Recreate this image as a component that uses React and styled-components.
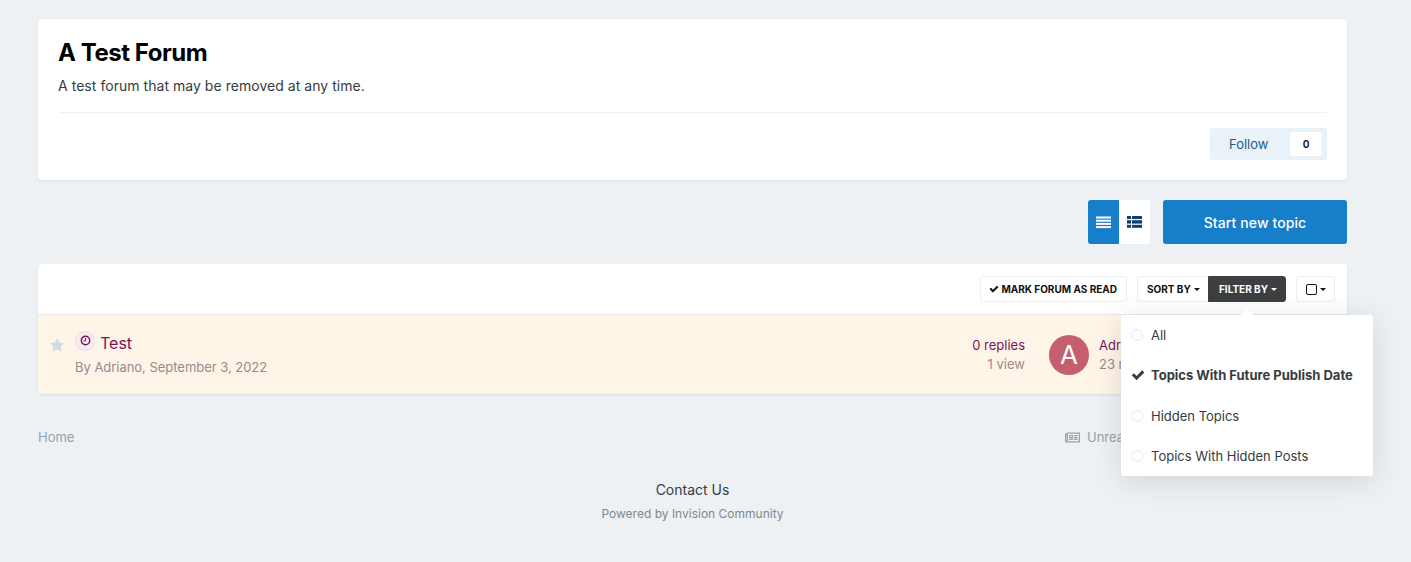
import styled, { createGlobalStyle } from "styled-components";
import { FaRegNewspaper, FaStar } from "react-icons/fa";

const Global = createGlobalStyle`
  html, body {
    margin: 0;
    padding: 0;
    background: #edf1f4;
    font-family: Inter, "Liberation Sans", sans-serif;
    color: #353c41;
  }
`;

const Page = styled.div`
  width: 1309px;
  margin-left: 38px;
  padding-top: 19px;
  height: 543px;
`;

const Card = styled.div`
  background: #fff;
  border-radius: 4px;
  box-shadow: 0 1px 3px rgba(0, 0, 0, 0.07);
`;

const Header = styled(Card)`
  height: 161px;
  box-sizing: border-box;
  padding: 19px 20px 20px 20px;
`;

const Title = styled.h1`
  margin: 0;
  font-size: 24px;
  line-height: 29px;
  font-weight: 700;
  letter-spacing: -0.45px;
  color: #000;
`;

const Desc = styled.p`
  margin: 9px 0 0;
  font-size: 14px;
  line-height: 20px;
  letter-spacing: 0.04px;
`;

const Rule = styled.div`
  margin: 16px 0 0 1px;
  height: 1px;
  background: #eef0f2;
`;

const FollowRow = styled.div`
  display: flex;
  justify-content: flex-end;
  margin-top: 15px;
`;

const Follow = styled.div`
  width: 117px;
  height: 32px;
  box-sizing: border-box;
  display: flex;
  align-items: center;
  justify-content: space-between;
  padding: 0 5px 0 19px;
  background: #e9f2f9;
  border-radius: 3px;
  font-size: 13px;
  color: #1c5a8c;
`;

const Count = styled.span`
  width: 32px;
  height: 24px;
  display: flex;
  align-items: center;
  justify-content: center;
  background: #fff;
  border-radius: 3px;
  font-size: 10px;
  font-weight: 700;
  color: #222;
`;

const Actions = styled.div`
  display: flex;
  justify-content: flex-end;
  margin-top: 20px;
  height: 44px;
`;

const ViewSwitch = styled.div`
  display: flex;
  width: 62px;
  border-radius: 3px;
  overflow: hidden;
  margin-right: 13px;
`;

const ViewBtn = styled.span`
  flex: 1;
  display: flex;
  align-items: center;
  justify-content: center;
  background: ${(p) => (p.$active ? "#177ec9" : "#fff")};
  color: ${(p) => (p.$active ? "#fff" : "#0f3f6e")};
`;

const Primary = styled.span`
  width: 184px;
  display: flex;
  align-items: center;
  justify-content: center;
  background: #177ec9;
  color: #fff;
  border-radius: 3px;
  font-size: 14px;
  font-weight: 500;
  letter-spacing: 0.1px;
`;

const Table = styled(Card)`
  margin-top: 20px;
`;

const Toolbar = styled.div`
  height: 51px;
  box-sizing: border-box;
  display: flex;
  align-items: flex-start;
  justify-content: flex-end;
  padding: 12px 12px 0 0;
  border-bottom: 1px solid #e6e8ea;
`;

const ToolBtn = styled.span`
  height: 26px;
  box-sizing: border-box;
  display: flex;
  align-items: center;
  gap: 2px;
  padding: 0 9px;
  font-size: 10px;
  font-weight: 700;
  white-space: nowrap;
  background: #fff;
  color: #111;
  border: 1px solid #eceef0;
  border-radius: 3px;
`;

const MarkBtn = styled(ToolBtn)`
  padding-left: 8px;
`;

const Group = styled.div`
  display: flex;
  margin-left: 10px;
  position: relative;
`;

const SortBtn = styled(ToolBtn)`
  width: 71px;
  border-right: 0;
  border-radius: 3px 0 0 3px;
`;

const FilterBtn = styled(ToolBtn)`
  width: 78px;
  padding-left: 10px;
  background: #3d3f43;
  border-color: #3d3f43;
  color: #fff;
  border-radius: 0 3px 3px 0;
`;

const CheckBtn = styled(ToolBtn)`
  width: 39px;
  margin-left: 10px;
  justify-content: center;
  gap: 2px;
  padding: 0;
`;

const Square = styled.span`
  width: 9px;
  height: 9px;
  border: 1px solid #111;
  border-radius: 2px;
`;

const Caret = styled.span`
  width: 0;
  height: 0;
  margin-left: 1px;
  border-left: 3.5px solid transparent;
  border-right: 3.5px solid transparent;
  border-top: 3.5px solid currentColor;
`;

const Menu = styled.div`
  position: absolute;
  top: 39px;
  left: -16px;
  width: 252px;
  height: 161px;
  background: #fff;
  border-radius: 3px;
  box-shadow: 0 5px 30px rgba(0, 0, 0, 0.12);
  z-index: 5;
  display: flex;
  flex-direction: column;
  &::before {
    content: "";
    position: absolute;
    top: -6px;
    left: 119px;
    border-left: 7px solid transparent;
    border-right: 7px solid transparent;
    border-bottom: 6px solid #fff;
  }
`;

const MenuItem = styled.div`
  flex: 1;
  display: flex;
  align-items: center;
  gap: ${(p) => (p.$on ? 6 : 8)}px;
  padding-left: 10px;
  font-size: 13px;
  font-weight: ${(p) => (p.$on ? 700 : 400)};
  color: #353c41;
`;

const Radio = styled.span`
  width: 12px;
  height: 12px;
  box-sizing: border-box;
  border: 1px solid #e5e7ea;
  border-radius: 50%;
`;

const Row = styled.div`
  height: 79px;
  display: flex;
  align-items: center;
  background: #fff4e8;
  border-radius: 0 0 4px 4px;
`;

const StarCell = styled.span`
  width: 37px;
  padding-left: 12px;
  box-sizing: border-box;
  align-self: flex-start;
  margin-top: 23px;
  color: #d3dde0;
  font-size: 14px;
  display: flex;
`;

const TopicCell = styled.div`
  flex: 1;
  padding-bottom: 2px;
`;

const TopicTitle = styled.div`
  display: flex;
  align-items: center;
  gap: 5px;
  font-size: 16px;
  line-height: 22px;
  color: #7a1458;
`;

const ClockBadge = styled.span`
  width: 20px;
  height: 20px;
  margin-top: -4px;
  display: flex;
  justify-content: center;
  padding-top: 3px;
  border-radius: 50%;
  background: #f5ebf0;
  border: 1px solid #e8dbe3;
  box-sizing: border-box;
  color: #7a1458;
`;

const Meta = styled.div`
  margin-top: 4px;
  font-size: 13px;
  line-height: 18px;
  letter-spacing: -0.03px;
  color: #9a8a8a;
`;

const Stats = styled.div`
  width: 80px;
  text-align: right;
  font-size: 13px;
  line-height: 19px;
  color: #9a8a8a;
`;

const Replies = styled.div`
  color: #7a1458;
`;

const Avatar = styled.span`
  width: 40px;
  height: 40px;
  margin-left: 24px;
  display: flex;
  align-items: center;
  justify-content: center;
  border-radius: 50%;
  background: #c4606e;
  color: #fff;
  font-size: 26px;
`;

const Last = styled.div`
  width: 248px;
  margin-left: 10px;
  font-size: 13px;
  line-height: 19px;
  color: #9a8a8a;
`;

const Footer = styled.div`
  display: flex;
  justify-content: space-between;
  margin-top: 35px;
  font-size: 13px;
  line-height: 16px;
  color: #98a2ab;
`;

const Unread = styled.span`
  display: flex;
  align-items: center;
  gap: 7px;
  width: 282px;
`;

const Contact = styled.div`
  margin-top: 35px;
  text-align: center;
  font-size: 14px;
  line-height: 20px;
  color: #353c41;
`;

const Powered = styled.div`
  margin-top: 6px;
  text-align: center;
  font-size: 12px;
  line-height: 16px;
  color: #7f8890;
`;

// font awesome 4 shapes, the v5 ones in react-icons are too thin here
function Check({ size }) {
  return (
    <svg width={size} height={size} viewBox="0 0 1792 1792" fill="currentColor">
      <path d="M1671 566q0 40-28 68l-724 724-136 136q-28 28-68 28t-68-28l-136-136-362-362q-28-28-28-68t28-68l136-136q28-28 68-28t68 28l294 295 656-657q28-28 68-28t68 28l136 136q28 28 28 68z" />
    </svg>
  );
}

function Lines() {
  return (
    <svg width="15" height="13" viewBox="0 0 15 13" fill="currentColor">
      <rect y="0.5" width="15" height="2" />
      <rect y="3.7" width="15" height="2" />
      <rect y="6.9" width="15" height="2" />
      <rect y="10.1" width="15" height="2" />
    </svg>
  );
}

function ListIcon() {
  return (
    <svg width="15" height="12" viewBox="0 0 15 12" fill="currentColor">
      <rect width="4" height="3" />
      <rect x="5" width="10" height="3" />
      <rect y="4.2" width="4" height="3.4" />
      <rect x="5" y="4.2" width="10" height="3.4" />
      <rect y="8.8" width="4" height="3" />
      <rect x="5" y="8.8" width="10" height="3" />
    </svg>
  );
}

function Clock() {
  return (
    <svg width="11" height="11" viewBox="0 0 11 11" fill="none" stroke="currentColor">
      <circle cx="5.5" cy="5.5" r="4.2" strokeWidth="1.4" />
      <path d="M5.5 3v2.8H3.6" strokeWidth="1" />
    </svg>
  );
}

export default function App() {
  return (
    <Page>
      <Global />
      <Header>
        <Title>A Test Forum</Title>
        <Desc>A test forum that may be removed at any time.</Desc>
        <Rule />
        <FollowRow>
          <Follow>
            Follow <Count>0</Count>
          </Follow>
        </FollowRow>
      </Header>

      <Actions>
        <ViewSwitch>
          <ViewBtn $active><Lines /></ViewBtn>
          <ViewBtn><ListIcon /></ViewBtn>
        </ViewSwitch>
        <Primary>Start new topic</Primary>
      </Actions>

      <Table>
        <Toolbar>
          <MarkBtn><Check size={10} /> MARK FORUM AS READ</MarkBtn>
          <Group>
            <SortBtn>SORT BY <Caret /></SortBtn>
            <FilterBtn>FILTER BY <Caret /></FilterBtn>
            <Menu>
              <MenuItem><Radio />All</MenuItem>
              <MenuItem $on><Check size={14} />Topics With Future Publish Date</MenuItem>
              <MenuItem><Radio />Hidden Topics</MenuItem>
              <MenuItem><Radio />Topics With Hidden Posts</MenuItem>
            </Menu>
          </Group>
          <CheckBtn><Square /><Caret /></CheckBtn>
        </Toolbar>
        <Row>
          <StarCell><FaStar /></StarCell>
          <TopicCell>
            <TopicTitle><ClockBadge><Clock /></ClockBadge>Test</TopicTitle>
            <Meta>By Adriano, September 3, 2022</Meta>
          </TopicCell>
          <Stats>
            <Replies>0 replies</Replies>
            <div>1 view</div>
          </Stats>
          <Avatar>A</Avatar>
          <Last>
            <Replies>Adriano</Replies>
            <div>23 minutes ago</div>
          </Last>
        </Row>
      </Table>

      <Footer>
        <span>Home</span>
        <Unread><FaRegNewspaper size={15} /> Unread Content</Unread>
      </Footer>
      <Contact>Contact Us</Contact>
      <Powered>Powered by Invision Community</Powered>
    </Page>
  );
}
